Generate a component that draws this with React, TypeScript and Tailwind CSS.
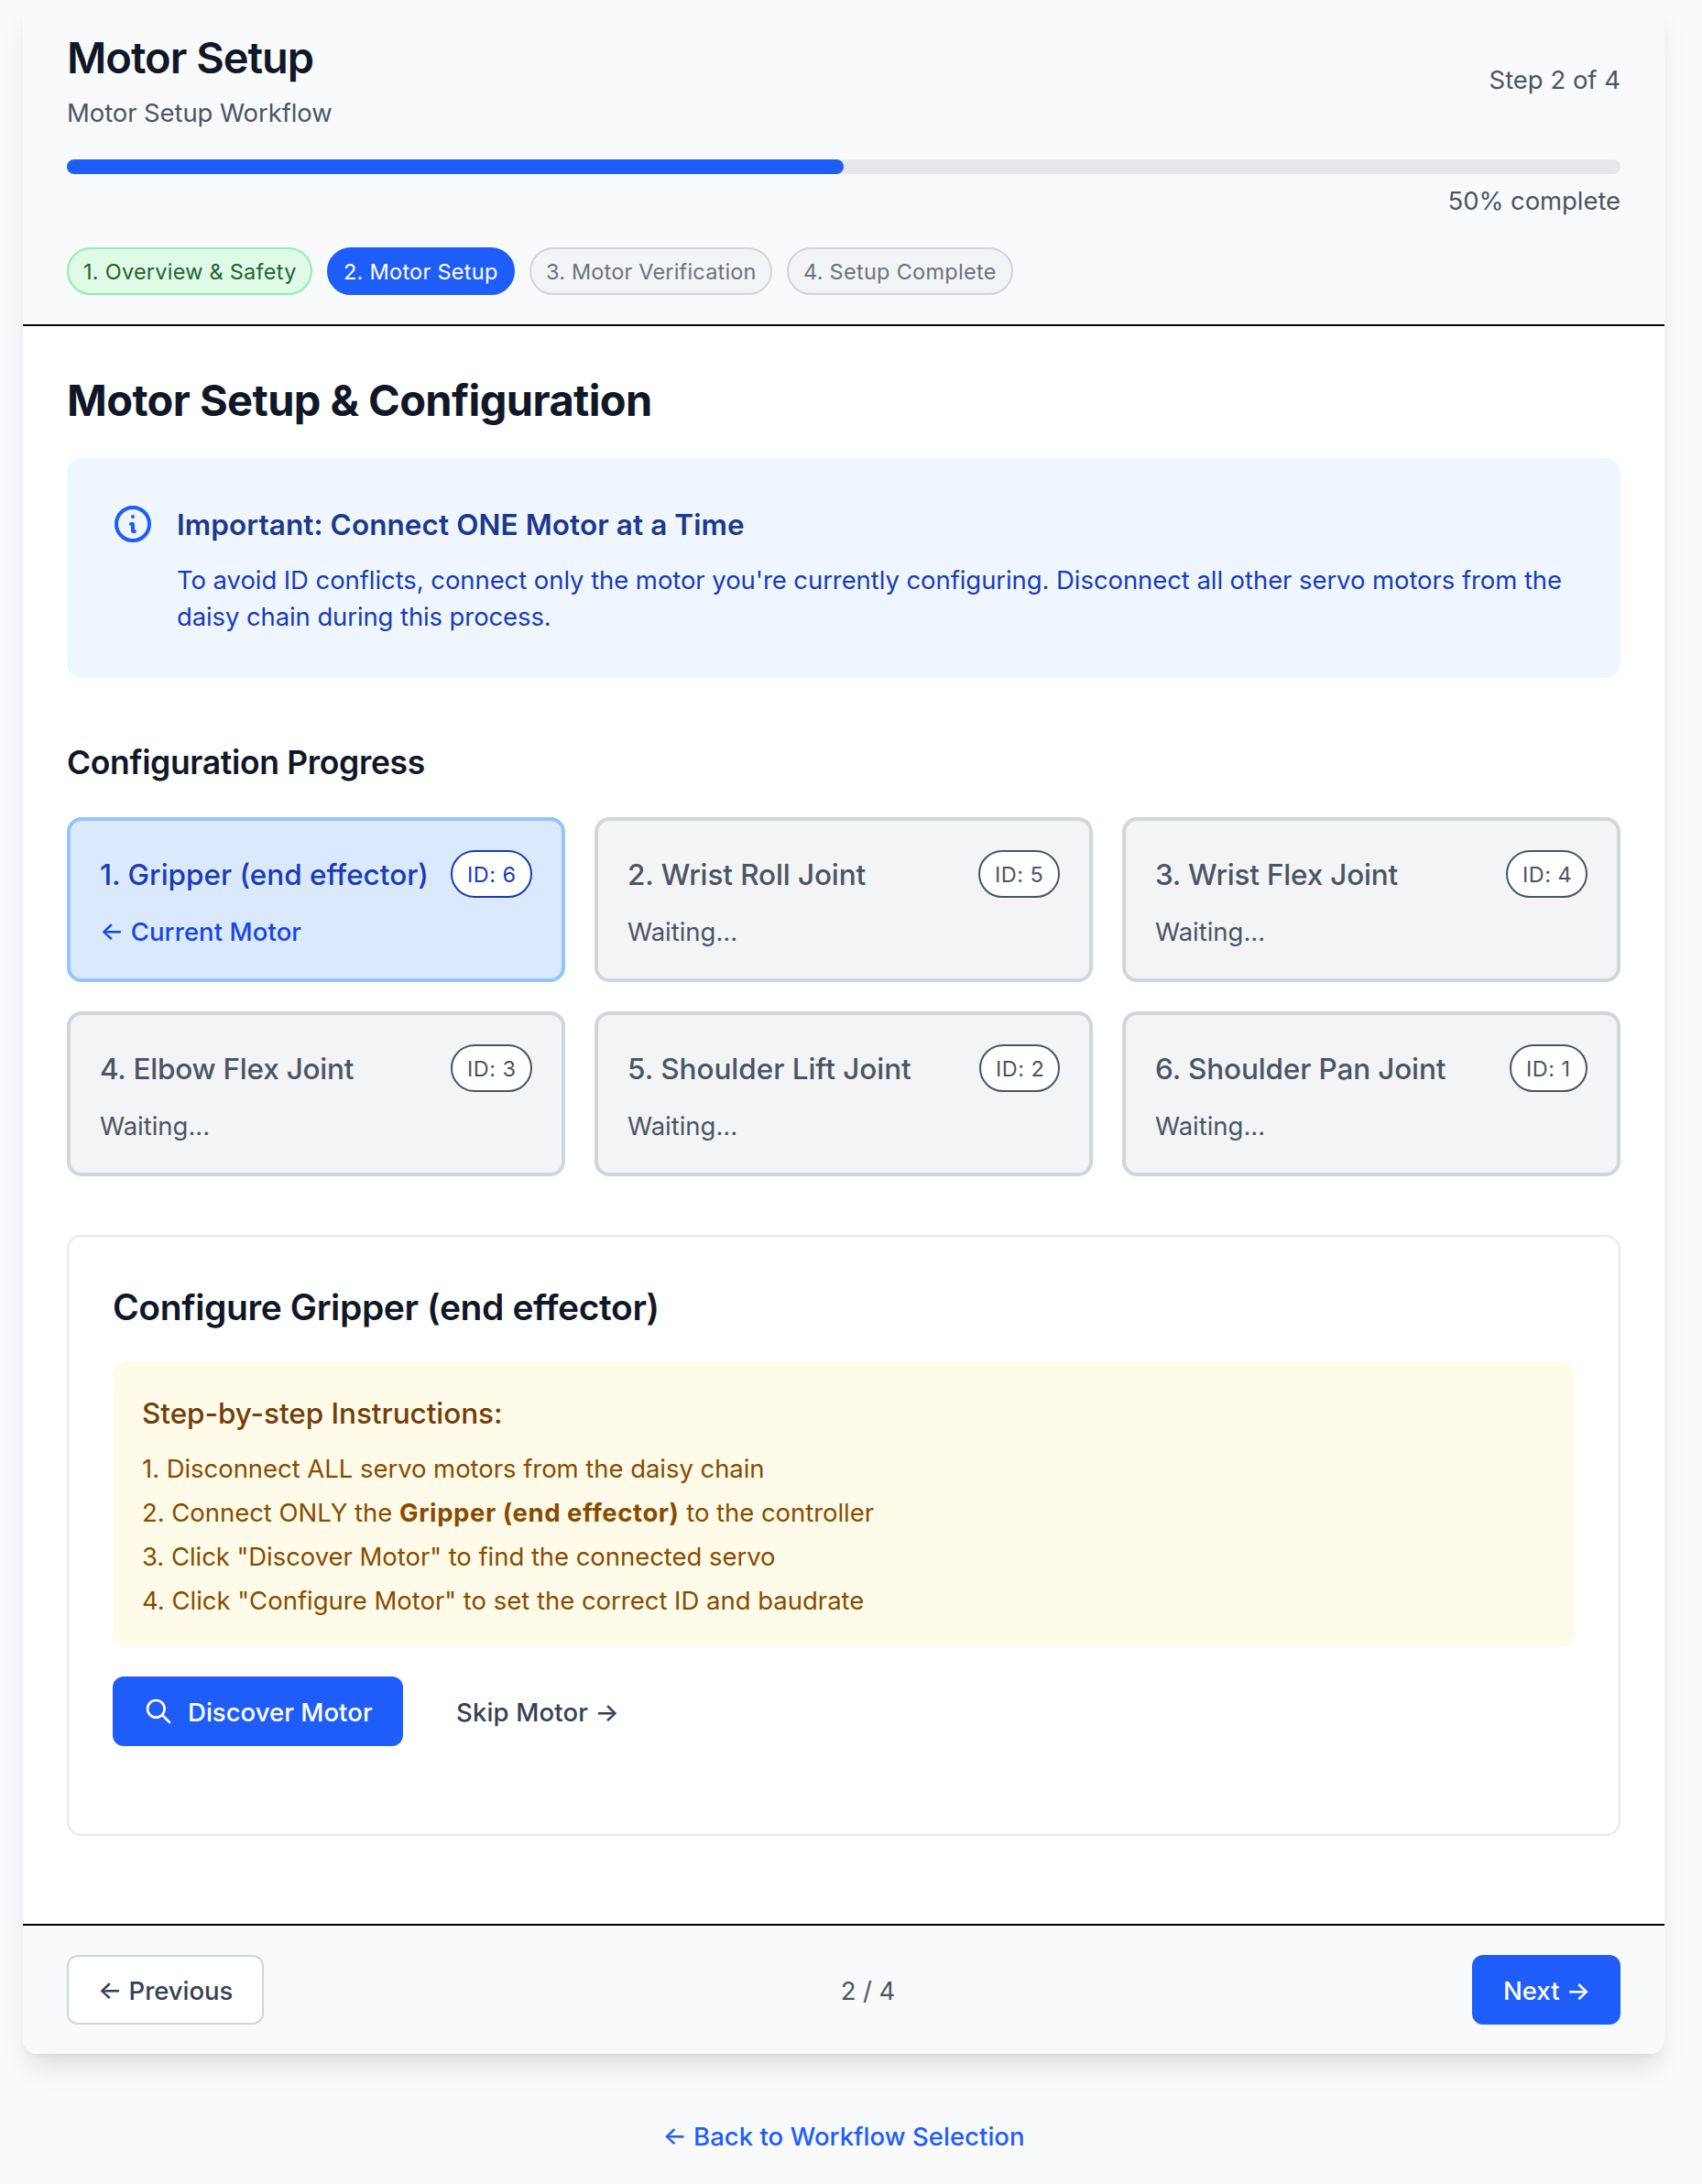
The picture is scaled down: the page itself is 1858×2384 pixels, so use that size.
import type { ReactNode } from "react";

const steps = [
  {
    label: "1. Overview & Safety",
    style: "w-[268px] border-[#8cf0ac] bg-[#dffbe7] text-[#216433] tracking-[0.0105em]",
  },
  {
    label: "2. Motor Setup",
    style: "w-[205px] border-[#1f5dfb] bg-[#1f5dfb] text-white tracking-[0.0115em]",
  },
  {
    label: "3. Motor Verification",
    style: "w-[265px] border-gray-300 bg-gray-100 text-gray-500 tracking-[0.0075em]",
  },
  {
    label: "4. Setup Complete",
    style: "w-[247px] border-gray-300 bg-gray-100 text-gray-500 tracking-[0.012em]",
  },
];

const motors = [
  { name: "1. Gripper (end effector)", id: 6, badge: "w-[89px]", tracking: "tracking-[-0.001em]", current: true },
  { name: "2. Wrist Roll Joint", id: 5, badge: "w-[89px]", tracking: "tracking-[-0.0035em]" },
  { name: "3. Wrist Flex Joint", id: 4, badge: "w-[89px]", tracking: "tracking-[-0.0065em]" },
  { name: "4. Elbow Flex Joint", id: 3, badge: "w-[89px]", tracking: "tracking-[-0.0075em]" },
  { name: "5. Shoulder Lift Joint", id: 2, badge: "w-[88px]", tracking: "tracking-[-0.001em]" },
  { name: "6. Shoulder Pan Joint", id: 1, badge: "w-[85px]", tracking: "tracking-[-0.0045em]" },
];

function LeftArrow() {
  return <span className="inline-block -translate-y-px">←</span>;
}

function Header() {
  return (
    <header className="border-b-2 border-black bg-gray-50 px-12 py-8">
      <div className="flex items-center justify-between">
        <div>
          <h1 className="translate-y-px text-[47px] leading-[64px] font-semibold tracking-[-0.0215em] text-gray-900">
            Motor Setup
          </h1>
          <p className="mt-2 translate-y-px tracking-[-0.0035em] text-gray-600">Motor Setup Workflow</p>
        </div>
        <span className="translate-y-px tracking-[-0.0005em] text-gray-600">Step 2 of 4</span>
      </div>
      <div className="mt-8 h-4 rounded-full bg-gray-200">
        <div className="h-4 w-1/2 rounded-full bg-[#1f5dfb]" />
      </div>
      <p className="mt-2 translate-y-px text-right tracking-[-0.003em] text-gray-600">50% complete</p>
      <div className="mt-8 flex gap-4">
        {steps.map((s) => (
          <span
            key={s.label}
            className={`rounded-full border-2 pt-[9px] pb-[7px] pl-4 text-[23.5px] leading-8 whitespace-nowrap ${s.style}`}
          >
            {s.label}
          </span>
        ))}
      </div>
    </header>
  );
}

function Notice() {
  return (
    <section className="mt-8 flex rounded-2xl bg-blue-50 p-12">
      <svg
        className="size-12 shrink-0 text-[#1f5dfb]"
        viewBox="0 0 24 24"
        fill="none"
        stroke="currentColor"
        strokeWidth="2"
        strokeLinecap="round"
        strokeLinejoin="round"
      >
        <path d="M13 16h-1v-4h-1m1-4h.01M21 12a9 9 0 11-18 0 9 9 0 0118 0z" />
      </svg>
      <div className="ml-6">
        <h3 className="translate-y-px text-[31.5px] leading-[48px] font-semibold tracking-[0.0025em] text-blue-900">
          Important: Connect ONE Motor at a Time
        </h3>
        <p className="mt-4 translate-y-px whitespace-nowrap text-blue-800">
          <span className="tracking-[-0.0028em]">
            To avoid ID conflicts, connect only the motor you're currently configuring. Disconnect all other servo
            motors from the
          </span>
          <br />
          <span className="tracking-[-0.004em]">daisy chain during this process.</span>
        </p>
      </div>
    </section>
  );
}

function MotorCard({ motor }: { motor: (typeof motors)[number] }) {
  const tone = motor.current
    ? "border-[#93c5fd] bg-[#dbe9fd] text-blue-800"
    : "border-gray-300 bg-gray-100 text-gray-600";
  return (
    <div className={`rounded-2xl border-4 p-8 ${tone}`}>
      <div className="flex h-[52px] items-center justify-between">
        <span
          className={`translate-y-px text-[31.5px] leading-[48px] font-medium whitespace-nowrap ${motor.tracking}`}
        >
          {motor.name}
        </span>
        <span
          className={`rounded-full border-2 border-current bg-white pt-[9px] pb-[7px] pl-4 text-[23.5px] leading-8 tracking-[0.02em] whitespace-nowrap ${motor.badge}`}
        >
          ID: {motor.id}
        </span>
      </div>
      {motor.current ? (
        <p className="mt-4 translate-y-px font-medium tracking-[0.003em] text-[#1447e6]">
          <LeftArrow /> Current Motor
        </p>
      ) : (
        <p className="mt-4 translate-y-px tracking-[-0.001em]">Waiting...</p>
      )}
    </div>
  );
}

function Step({ children, className }: { children: ReactNode; className: string }) {
  return <li className={`translate-y-px whitespace-nowrap ${className}`}>{children}</li>;
}

function Configure() {
  return (
    <section className="mt-16 h-[656px] rounded-2xl border-2 border-gray-200 p-12">
      <h3 className="translate-y-px text-[39px] leading-[56px] font-semibold tracking-[-0.01em] text-gray-900">
        Configure Gripper (end effector)
      </h3>
      <div className="mt-8 rounded-2xl bg-yellow-50 p-8">
        <h4 className="translate-y-px text-[31.5px] leading-[48px] font-medium tracking-[-0.002em] text-[#733e0a]">
          Step-by-step Instructions:
        </h4>
        <ol className="mt-4 space-y-2 text-[#894b00]">
          <Step className="tracking-[-0.0018em]">1. Disconnect ALL servo motors from the daisy chain</Step>
          <Step className="tracking-[-0.0015em]">
            2. Connect ONLY the <strong className="font-bold tracking-[0.0205em]">Gripper (end effector)</strong> to
            the controller
          </Step>
          <Step className="tracking-[-0.0018em]">3. Click "Discover Motor" to find the connected servo</Step>
          <Step className="tracking-[-0.0005em]">4. Click "Configure Motor" to set the correct ID and baudrate</Step>
        </ol>
      </div>
      <div className="mt-8 flex gap-6">
        <button className="flex h-[76px] w-[317px] items-center rounded-xl bg-[#1f5dfb] pl-[34px] font-medium whitespace-nowrap text-white">
          <svg
            className="mr-4 size-8 shrink-0"
            viewBox="0 0 24 24"
            fill="none"
            stroke="currentColor"
            strokeWidth="2"
            strokeLinecap="round"
            strokeLinejoin="round"
          >
            <path d="M21 21l-6-6m2-5a7 7 0 11-14 0 7 7 0 0114 0z" />
          </svg>
          <span className="translate-y-px tracking-[0.0015em]">Discover Motor</span>
        </button>
        <button className="h-[76px] px-[34px] pt-0.5 font-medium tracking-[0.006em] whitespace-nowrap text-gray-700">
          Skip Motor →
        </button>
      </div>
    </section>
  );
}

function Footer() {
  return (
    <footer className="mt-24 flex items-center justify-between border-t-2 border-black bg-gray-50 px-12 py-8">
      <button className="h-[76px] w-[215px] rounded-xl border-2 border-gray-300 bg-white pt-0.5 pl-8 text-left font-medium tracking-[-0.001em] whitespace-nowrap text-gray-700">
        <LeftArrow /> Previous
      </button>
      <span className="translate-y-px tracking-[-0.002em] text-gray-600">2 / 4</span>
      <button className="h-[76px] w-[162px] rounded-xl bg-[#1f5dfb] pt-0.5 pl-[34px] text-left font-medium whitespace-nowrap text-white">
        Next →
      </button>
    </footer>
  );
}

export default function App() {
  return (
    <div className="flex h-[2384px] w-[1858px] flex-col overflow-hidden bg-gray-50 pl-[25px] font-[Inter,sans-serif] text-[27.5px] leading-10">
      <div className="-mt-0.5 w-[1792px] shrink-0 overflow-hidden rounded-2xl bg-white shadow-[0_20px_30px_-6px_rgb(0_0_0/0.1),0_8px_12px_-8px_rgb(0_0_0/0.1)]">
        <Header />
        <main className="px-12 pt-12">
          <h2 className="translate-y-px text-[47px] leading-[64px] font-bold tracking-[-0.0125em] text-gray-900">
            Motor Setup &amp; Configuration
          </h2>
          <Notice />
          <h3 className="mt-16 translate-y-px text-[35.5px] leading-[56px] font-semibold tracking-[-0.0095em] text-gray-900">
            Configuration Progress
          </h3>
          <div className="mt-8 grid grid-cols-3 gap-8">
            {motors.map((m) => (
              <MotorCard key={m.id} motor={m} />
            ))}
          </div>
          <Configure />
        </main>
        <Footer />
      </div>
      <div className="mt-[70px] w-[1792px] text-center">
        <a className="font-medium tracking-[0.0015em] text-[#1f5dfb]">
          <LeftArrow /> Back to Workflow Selection
        </a>
      </div>
    </div>
  );
}
